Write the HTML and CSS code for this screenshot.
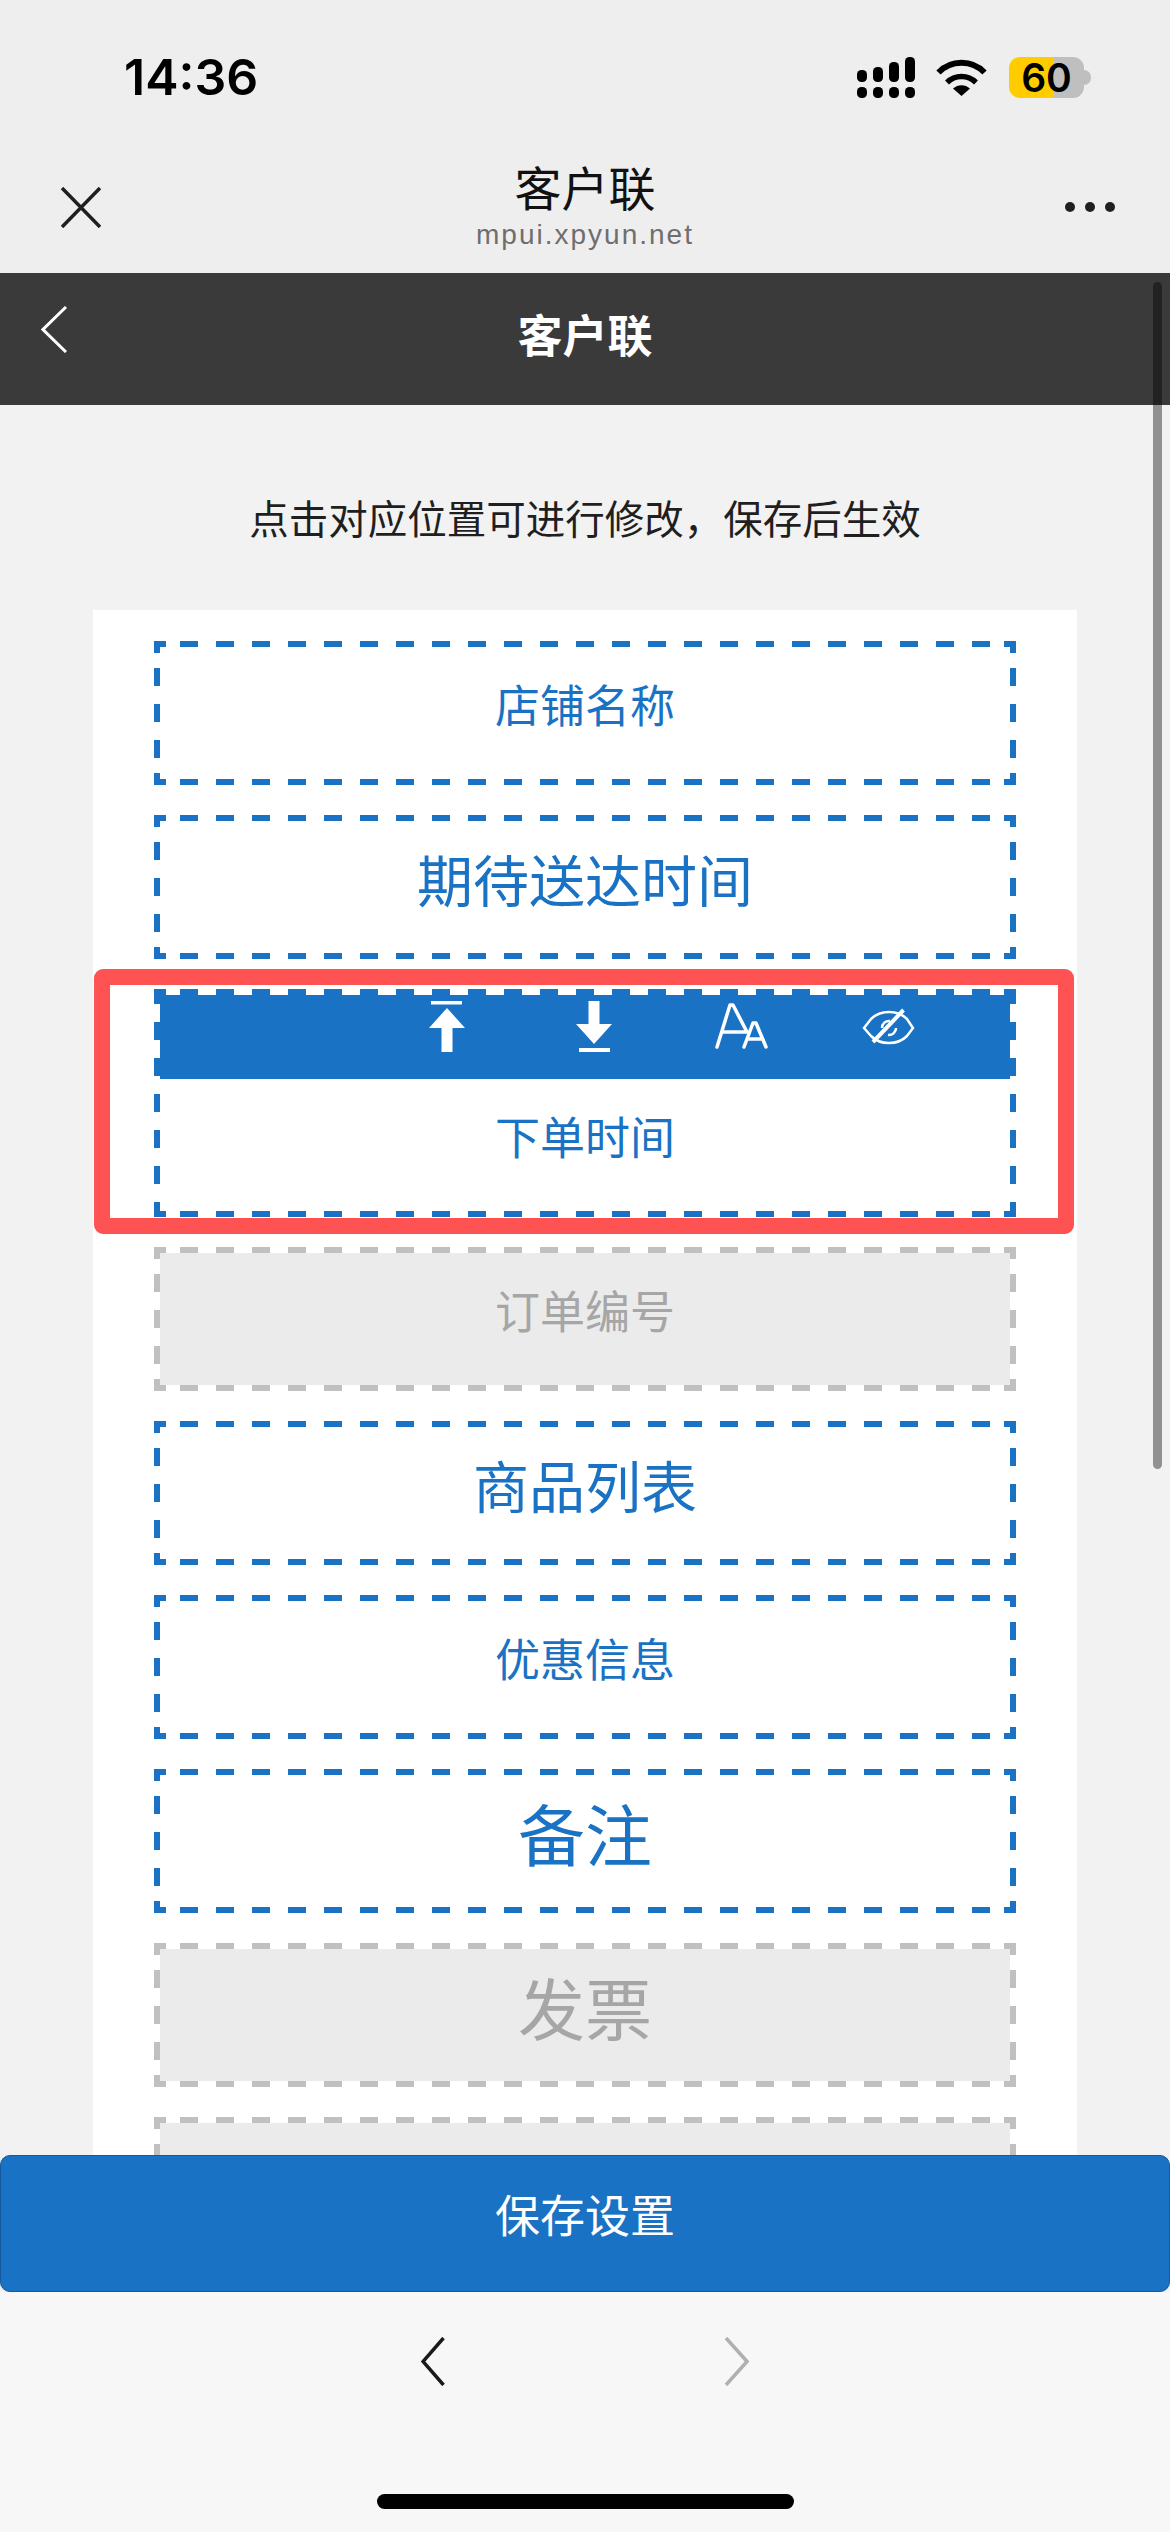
FILE: index.html
```html
<!DOCTYPE html>
<html lang="zh-CN">
<head>
  <meta charset="UTF-8" />
  <title>客户联</title>
  <link rel="stylesheet" href="styles.css">
</head>
<body>

<div class="phone">
  <div class="status-bar">
    <span class="time">14:36</span>
    <div class="status-icons">
      <svg class="signal" width="58" height="41" viewBox="0 0 58 41">
        <rect x="0" y="13" width="10" height="12" rx="4.5"/>
        <rect x="16" y="10" width="10" height="15" rx="4.5"/>
        <rect x="32" y="5" width="10" height="20" rx="4.5"/>
        <rect x="48" y="0" width="10" height="25" rx="4.5"/>
        <rect x="0" y="30" width="10" height="11" rx="4.5"/>
        <rect x="16" y="30" width="10" height="11" rx="4.5"/>
        <rect x="32" y="30" width="10" height="11" rx="4.5"/>
        <rect x="48" y="30" width="10" height="11" rx="4.5"/>
      </svg>
      <svg class="wifi" width="51" height="37" viewBox="0 0 51 37">
        <path d="M2.5 13.5C15 0.5 36 0.5 48.5 13.5" fill="none" stroke="#000" stroke-width="6"/>
        <path d="M11 23.5C19 15.5 32 15.5 40 23.5" fill="none" stroke="#000" stroke-width="5.5"/>
        <path d="M17 29.5C22 25 29 25 34 29.5L25.5 37Z"/>
      </svg>
      <div class="battery">60</div>
    </div>
  </div>

  <div class="nav-bar">
    <svg class="nav-close" width="40" height="41" viewBox="0 0 40 41">
      <path d="M1 1L39 40M39 1L1 40" fill="none" stroke="#1f1f1f" stroke-width="3.5"/>
    </svg>
    <div class="nav-title">
      <div class="nav-name">客户联</div>
      <div class="nav-host">mpui.xpyun.net</div>
    </div>
    <div class="nav-more"><i></i><i></i><i></i></div>
  </div>

  <header class="app-header">
    <svg class="back" width="26" height="47" viewBox="0 0 26 47">
      <path d="M25 1L2 23.5L25 46" fill="none" stroke="#fff" stroke-width="3"/>
    </svg>
    <h1>客户联</h1>
  </header>

  <main class="content">
    <p class="hint">点击对应位置可进行修改，保存后生效</p>

    <section class="panel">
      <div class="field"><div class="field-label">店铺名称</div></div>
      <div class="field"><div class="field-label size-m">期待送达时间</div></div>

      <div class="field selected">
        <div class="toolbar">
          <svg width="60" height="56" viewBox="0 0 60 56" fill="#fff">
            <rect x="14" y="3" width="31" height="3.5"/>
            <path d="M30 10L48 30H35.5V54H24.5V30H12Z"/>
          </svg>
          <svg width="60" height="56" viewBox="0 0 60 56" fill="#fff">
            <path d="M24.5 3H35.5V26H48L30 46L12 26H24.5Z"/>
            <rect x="15" y="50" width="31" height="4"/>
          </svg>
          <svg width="60" height="56" viewBox="0 0 60 56" fill="none" stroke="#fff" stroke-width="3.5" stroke-linecap="round" stroke-linejoin="round">
            <path d="M6 49L19 7H22L36 34H11"/>
            <path d="M33 49L42 25H45L55 49M37 41H51"/>
          </svg>
          <svg width="60" height="56" viewBox="0 0 60 56" fill="none" stroke="#fff" stroke-width="2.5">
            <path d="M6 30L13 21Q20 14 31 14Q42 14 49 21L55 30L49 38Q42 45 31 45Q20 45 13 38Z"/>
            <path d="M24 30A7 7 0 0 1 32 23M38 30A7 7 0 0 1 30 37"/>
            <path d="M45.5 12L15 44" stroke-width="4"/>
          </svg>
        </div>
        <div class="field-label">下单时间</div>
        <div class="field-mark"></div>
      </div>

      <div class="field off"><div class="field-label">订单编号</div></div>
      <div class="field"><div class="field-label size-m">商品列表</div></div>
      <div class="field"><div class="field-label">优惠信息</div></div>
      <div class="field"><div class="field-label size-l">备注</div></div>
      <div class="field off"><div class="field-label size-l">发票</div></div>
      <div class="field off"><div class="field-label"></div></div>
    </section>
  </main>

  <button class="save-btn">保存设置</button>

  <footer class="browser-bar">
    <div class="browser-arrows">
      <svg width="24" height="49" viewBox="0 0 24 49">
        <path d="M22.5 1L2 24.5L22.5 48" fill="none" stroke="#1a1a1a" stroke-width="3.5"/>
      </svg>
      <svg width="25" height="49" viewBox="0 0 25 49">
        <path d="M2 1L23 24.5L2 48" fill="none" stroke="#b0b0b0" stroke-width="3.5"/>
      </svg>
    </div>
    <div class="home-indicator"></div>
  </footer>

  <!-- page scroll indicator, sits over the content -->
  <div class="scroll-thumb"></div>
</div>

</body>
</html>
```

FILE: styles.css
```css
* {
  box-sizing: border-box;
}

body {
  margin: 0;
  background: #f2f2f2;
  font-family: "Noto Sans CJK SC", "Noto Sans", sans-serif;
}

.phone {
  position: relative;
  display: flex;
  flex-direction: column;
  width: 1170px;
  height: 2532px;
  overflow: hidden;
}

/* Status bar */
.status-bar {
  display: flex;
  flex: none;
  justify-content: space-between;
  align-items: flex-start;
  height: 130px;
  padding: 57px 86px 0 124px;
  background: #eeeeee;
}

.time {
  font-family: Inter, sans-serif;
  font-size: 50px;
  font-weight: 600;
  line-height: 41px;
  color: #000;
}

.status-icons {
  display: flex;
  align-items: flex-start;
}

.wifi {
  margin: 2px 22px 0 21px;
}

.battery {
  position: relative;
  width: 75px;
  height: 41px;
  border-radius: 11px;
  background: linear-gradient(90deg, #ffcc00 60%, #bfbfbf 60%);
  font-family: Inter, sans-serif;
  font-size: 39px;
  font-weight: 600;
  line-height: 41px;
  text-align: center;
  color: #000;
}

.battery::after {
  content: "";
  position: absolute;
  top: 13px;
  right: -7px;
  width: 7px;
  height: 15px;
  border-radius: 0 8px 8px 0;
  background: #bfbfbf;
}

/* WeChat style nav */
.nav-bar {
  display: grid;
  flex: none;
  grid-template-columns: 1fr auto 1fr;
  height: 143px;
  padding: 0 55px;
  background: #eeeeee;
}

.nav-close {
  margin: 57px 0 0 6px;
}

.nav-title {
  text-align: center;
}

.nav-name {
  margin-top: 27px;
  font-size: 47px;
  line-height: 58px;
  color: #111;
}

.nav-host {
  margin-top: 4px;
  font-family: "Liberation Sans", sans-serif;
  font-size: 28px;
  line-height: 32px;
  letter-spacing: 2px;
  color: #6e6e6e;
}

.nav-more {
  display: flex;
  justify-content: flex-end;
  gap: 10px;
  margin-top: 72px;
}

.nav-more i {
  width: 10px;
  height: 10px;
  border-radius: 50%;
  background: #1f1f1f;
}

/* App header */
.app-header {
  position: relative;
  display: flex;
  flex: none;
  justify-content: center;
  align-items: center;
  height: 132px;
  padding-bottom: 12px;
  background: #3a3a3a;
}

.app-header h1 {
  margin: 0;
  font-size: 45px;
  font-weight: 700;
  color: #fff;
}

.back {
  position: absolute;
  top: 33px;
  left: 41px;
}

/* Content */
.content {
  flex: 1;
  min-height: 0;
  overflow: hidden;
  background: #f2f2f2;
}

.hint {
  display: flex;
  justify-content: center;
  align-items: center;
  height: 205px;
  margin: 0;
  padding-top: 18px;
  font-size: 39.5px;
  color: #1f1f1f;
}

.panel {
  display: flex;
  flex-direction: column;
  gap: 30px;
  width: 984px;
  margin: 0 auto;
  padding: 31px 61px 40px;
  background: #fff;
}

/* 18/18 dashes centred on each edge, plus the corner pieces */
.field {
  --c: #1a72c4;
  position: relative;
  display: flex;
  flex: none;
  flex-direction: column;
  height: 144px;
  padding: 6px;
  background-image:
    linear-gradient(var(--c), var(--c)), linear-gradient(var(--c), var(--c)),
    linear-gradient(var(--c), var(--c)), linear-gradient(var(--c), var(--c)),
    linear-gradient(var(--c), var(--c)), linear-gradient(var(--c), var(--c)),
    linear-gradient(var(--c), var(--c)), linear-gradient(var(--c), var(--c)),
    linear-gradient(90deg, transparent 25%, var(--c) 25%, var(--c) 75%, transparent 75%),
    linear-gradient(90deg, transparent 25%, var(--c) 25%, var(--c) 75%, transparent 75%),
    linear-gradient(transparent 25%, var(--c) 25%, var(--c) 75%, transparent 75%),
    linear-gradient(transparent 25%, var(--c) 25%, var(--c) 75%, transparent 75%);
  background-size:
    12px 6px, 6px 12px, 12px 6px, 6px 12px,
    12px 6px, 6px 12px, 12px 6px, 6px 12px,
    36px 6px, 36px 6px, 6px 36px, 6px 36px;
  background-position:
    left top, left top, right top, right top,
    left bottom, left bottom, right bottom, right bottom,
    center top, center bottom, left center, right center;
  background-repeat:
    no-repeat, no-repeat, no-repeat, no-repeat,
    no-repeat, no-repeat, no-repeat, no-repeat,
    repeat-x, repeat-x, repeat-y, repeat-y;
}

.field.off {
  --c: #c0c0c0;
}

.field-label {
  display: flex;
  flex: 1;
  justify-content: center;
  align-items: center;
  padding-bottom: 20px;
  font-size: 45px;
  color: #1a72c4;
}

.size-m {
  font-size: 56px;
}

.size-l {
  font-size: 67px;
}

.field.off .field-label {
  background: #ebebeb;
  color: #a6a6a6;
}

.field.selected {
  height: 228px;
}

.toolbar {
  display: flex;
  flex: none;
  justify-content: flex-end;
  gap: 87px;
  height: 84px;
  padding: 3px 92px 0 0;
  background: #1a72c4;
}

.field-mark {
  position: absolute;
  top: -20px;
  right: -58px;
  bottom: -17px;
  left: -60px;
  border: 16px solid #ff5252;
  border-radius: 9px;
}

/* Bottom */
.save-btn {
  flex: none;
  width: 100%;
  height: 137px;
  padding: 0 0 21px;
  border: 1px solid #155a9c;
  border-radius: 10px;
  background: #1a72c4;
  font-family: inherit;
  font-size: 45px;
  color: #fff;
}

.browser-bar {
  display: flex;
  flex: none;
  flex-direction: column;
  align-items: center;
  height: 240px;
  padding-top: 45px;
  background: #f7f7f7;
}

.browser-arrows {
  display: flex;
  gap: 279px;
}

.home-indicator {
  width: 417px;
  height: 15px;
  margin-top: 108px;
  border-radius: 8px;
  background: #000;
}

.scroll-thumb {
  position: absolute;
  top: 282px;
  right: 8px;
  width: 9px;
  height: 1187px;
  border-radius: 5px;
  background: rgba(0, 0, 0, 0.4);
}
```
